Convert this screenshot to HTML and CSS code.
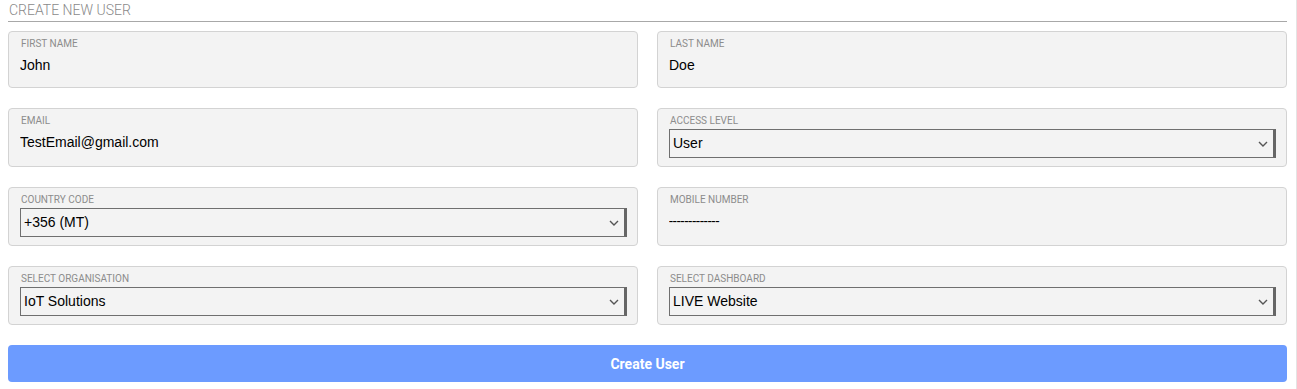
FILE: index.html
```html
<!DOCTYPE html>
<html lang="en">
  <head>
    <meta charset="UTF-8" />
    <meta name="viewport" content="width=device-width, initial-scale=1.0" />
    <title>Create New User</title>
    <link rel="stylesheet" href="styles.css">
  </head>
  <body>
    <div class="page">
      <h2 class="section-title">CREATE NEW USER</h2>
      <form class="user-form" id="userForm">
        <div class="form-grid">
          <div class="field-card">
            <label for="firstName">FIRST NAME</label>
            <input type="text" id="firstName" value="John" />
          </div>
          <div class="field-card">
            <label for="lastName">LAST NAME</label>
            <input type="text" id="lastName" value="Doe" />
          </div>

          <div class="field-card">
            <label for="email">EMAIL</label>
            <input type="email" id="email" value="TestEmail@gmail.com" />
          </div>
          <div class="field-card">
            <label for="accessLevel">ACCESS LEVEL</label>
            <select id="accessLevel">
              <option>User</option>
              <option>Admin</option>
            </select>
          </div>

          <div class="field-card">
            <label for="countryCode">COUNTRY CODE</label>
            <select id="countryCode">
              <option>+356 (MT)</option>
              <option>+44 (UK)</option>
            </select>
          </div>
          <div class="field-card">
            <label for="mobile">MOBILE NUMBER</label>
            <input type="text" id="mobile" class="mobile-input" value="-------------" />
          </div>

          <div class="field-card">
            <label for="organisation">SELECT ORGANISATION</label>
            <select id="organisation">
              <option>IoT Solutions</option>
            </select>
          </div>
          <div class="field-card">
            <label for="dashboard">SELECT DASHBOARD</label>
            <select id="dashboard">
              <option>LIVE Website</option>
            </select>
          </div>
        </div>

        <button type="submit" class="create-btn">Create User</button>
      </form>
    </div>
  </body>
</html>
```

FILE: styles.css
```css
* {
  margin: 0;
  padding: 0;
  box-sizing: border-box;
}
body {
  font-family: Roboto, "Liberation Sans", Arial, sans-serif;
  background: white;
  width: 1297px;
  min-height: 389px;
  border-right: 1px solid #e4e4e4;
}
.page {
  width: 1279px;
  margin-left: 8px;
}
.section-title {
  font-size: 14px;
  font-weight: 300;
  color: #8a8a8a;
  line-height: 21px;
  padding-left: 1px;
  border-bottom: 1px solid #a8a8a8;
}
.form-grid {
  display: grid;
  grid-template-columns: 630px 630px;
  column-gap: 19px;
  row-gap: 20px;
  margin-top: 9px;
}
.field-card {
  background: #f3f3f3;
  border: 1px solid #d3d3d3;
  border-radius: 4px;
  padding: 6px 10px 8px 11px;
}
label {
  display: block;
  font-size: 10px;
  line-height: 12px;
  color: #8c8c8c;
  margin-bottom: 2px;
  padding-left: 1px;
}
input,
select {
  display: block;
  width: 100%;
  font-family: "Liberation Sans", Arial, sans-serif;
  font-size: 14px;
  color: black;
  background-color: transparent;
  outline: none;
}
input {
  height: 26px;
  margin-bottom: 1px;
  border: none;
}
.mobile-input {
  font-family: Roboto, sans-serif;
}
select {
  height: 29px;
  appearance: none;
  border: 1px solid #6f6f6f;
  border-right: 3px solid #666;
  border-radius: 0;
  padding-left: 3px;
  padding-bottom: 1px;
  background-image: url("data:image/svg+xml;utf8,<svg xmlns='http://www.w3.org/2000/svg' width='10' height='6' viewBox='0 0 10 6'><path d='M1 1l4 4 4-4' fill='none' stroke='%23555' stroke-width='1.4'/></svg>");
  background-repeat: no-repeat;
  background-position: right 5px center;
}
.create-btn {
  display: block;
  width: 100%;
  height: 37px;
  margin-top: 20px;
  background: #6c9bff;
  color: white;
  border: none;
  border-radius: 4px;
  font-family: Roboto, sans-serif;
  font-size: 14px;
  font-weight: bold;
  cursor: pointer;
}
```
